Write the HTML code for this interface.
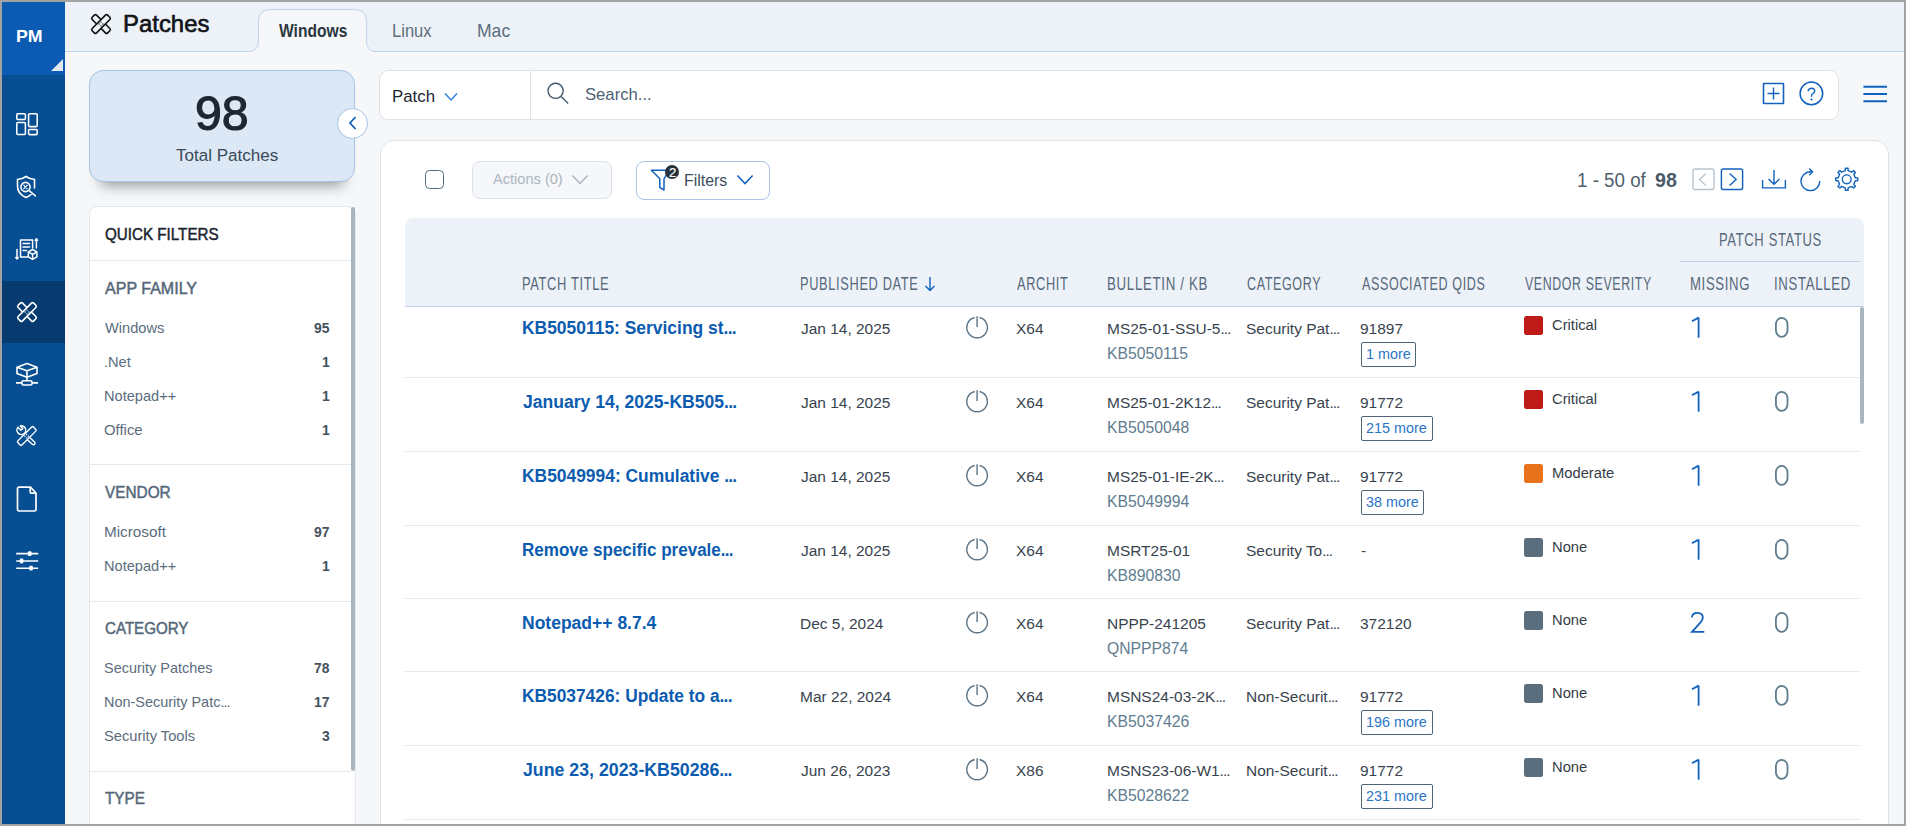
<!DOCTYPE html><html><head><meta charset="utf-8"><title>Patches</title><style>
html,body{margin:0;padding:0;}
body{width:1906px;height:826px;overflow:hidden;position:relative;background:#f5f7f9;font-family:"Liberation Sans", sans-serif;}
.t{position:absolute;white-space:nowrap;font-family:"Liberation Sans", sans-serif;transform-origin:0 0;}
svg{overflow:visible;}
</style></head><body>
<div style="position:absolute;left:65px;top:0px;width:1841.00px;height:52.00px;background:#edf2f9;border-bottom:1px solid #bfd3ea;box-sizing:border-box;"></div>
<svg style="position:absolute;left:246px;top:8px;" width="133" height="45" viewBox="0 0 133 45"><path d="M0 43.5 L4 43.5 A8.5 9.5 0 0 0 12.5 34 L12.5 13.5 Q12.5 1.5 24.5 1.5 L108.5 1.5 Q120.5 1.5 120.5 13.5 L120.5 34 A8.5 9.5 0 0 0 129 43.5 L133 43.5 L133 45 L0 45 Z" fill="#f5f7f9" stroke="none"/>
<path d="M0 43.5 L4 43.5 A8.5 9.5 0 0 0 12.5 34 L12.5 13.5 Q12.5 1.5 24.5 1.5 L108.5 1.5 Q120.5 1.5 120.5 13.5 L120.5 34 A8.5 9.5 0 0 0 129 43.5 L133 43.5" fill="none" stroke="#bfd3ea" stroke-width="1"/></svg>
<svg style="position:absolute;left:89px;top:11.5px;" width="24" height="24" viewBox="0 0 24 24"><g stroke="#111" stroke-width="1.6" stroke-linejoin="round">
<rect x="8.9" y="1.0" width="6.2" height="22.0" rx="1.6" fill="none" transform="rotate(-45 12 12)"/>
<rect x="8.9" y="1.0" width="6.2" height="22.0" rx="1.6" fill="#edf2f9" transform="rotate(45 12 12)"/></g>
<g fill="#111"><circle cx="12" cy="10.1" r="0.7"/><circle cx="10.1" cy="12" r="0.7"/><circle cx="13.9" cy="12" r="0.7"/><circle cx="12" cy="13.9" r="0.7"/></g></svg>
<div class="t" style="left:122.82px;top:12.00px;color:#111418;font-size:24.348px;line-height:24.348px;font-weight:400;-webkit-text-stroke:0.65px #111418;transform:scaleX(0.9828);">Patches</div>
<div class="t" style="left:278.50px;top:23.00px;color:#2b3640;font-size:17.971px;line-height:17.971px;font-weight:700;transform:scaleX(0.8692);">Windows</div>
<div class="t" style="left:391.70px;top:22.00px;color:#5d6d7c;font-size:18.406px;line-height:18.406px;font-weight:400;transform:scaleX(0.9000);">Linux</div>
<div class="t" style="left:476.95px;top:22.00px;color:#5d6d7c;font-size:18.406px;line-height:18.406px;font-weight:400;transform:scaleX(0.9545);">Mac</div>
<div style="position:absolute;left:0px;top:0px;width:65.00px;height:826.00px;background:#084e93;"></div>
<div style="position:absolute;left:0px;top:0px;width:65.00px;height:75.00px;background:#0a5bb1;"></div>
<div style="position:absolute;left:0px;top:281px;width:65.00px;height:62.00px;background:#073b70;"></div>
<div class="t" style="left:16.07px;top:28.00px;color:#ffffff;font-size:17.246px;line-height:17.246px;font-weight:700;transform:scaleX(1.0292);">PM</div>
<svg style="position:absolute;left:51px;top:59px;" width="13" height="12" viewBox="0 0 13 12"><path d="M0 12 L12 0 L12 12 Z" fill="#dfe8f3"/></svg>
<svg style="position:absolute;left:15px;top:112px;" width="24" height="24" viewBox="0 0 24 24"><g fill="none" stroke="#ffffff" stroke-width="1.55">
<rect x="1.8" y="1.8" width="8.6" height="5.6" rx="1"/>
<rect x="1.8" y="10.4" width="8.6" height="12" rx="1"/>
<rect x="13.6" y="1.8" width="8.6" height="12.8" rx="1"/>
<rect x="13.6" y="17.4" width="8.6" height="5.2" rx="1"/></g></svg>
<svg style="position:absolute;left:14.0px;top:175.4px;" width="24" height="24" viewBox="0 0 24 24"><g fill="none" stroke="#ffffff" stroke-width="1.6" stroke-linecap="round">
<path d="M12 1.5 Q8.5 4 3.5 4.5 L3.5 11 Q3.5 19 12 22.5 Q15 21.2 17 19.5"/>
<path d="M12 1.5 Q15.5 4 20.5 4.5 L20.5 13"/>
<circle cx="11.5" cy="12" r="4.6"/>
<path d="M9.7 10.2 L13.3 13.8 M13.3 10.2 L9.7 13.8" stroke-width="1.2"/>
<path d="M15 15.5 L21.4 20.8"/></g></svg>
<svg style="position:absolute;left:14px;top:237px;" width="26" height="25" viewBox="0 0 26 25"><g fill="none" stroke="#ffffff" stroke-width="1.5" stroke-linecap="round" stroke-linejoin="round">
<path d="M13.5 20 L6.5 20 L6.5 3 L18.6 3 L18.6 11"/>
<path d="M9 6.5 L15.5 6.5 M9 10 L15.5 10 M9 13.5 L12.5 13.5"/>
<path d="M3 12.5 L3 22 M1.8 20.6 L3 22 L4.2 20.6"/>
<path d="M22.4 11 L22.4 1.8 M21.2 3.2 L22.4 1.8 L23.6 3.2"/>
<path d="M18.6 12.5 L22.9 14.9 L22.9 19.9 L18.6 22.3 L14.3 19.9 L14.3 14.9 Z M14.3 14.9 L18.6 17.3 L22.9 14.9 M18.6 17.3 L18.6 22.3"/>
</g></svg>
<svg style="position:absolute;left:15px;top:300px;" width="24" height="24" viewBox="0 0 24 24"><g stroke="#ffffff" stroke-width="1.6" stroke-linejoin="round">
<rect x="8.9" y="1.0" width="6.2" height="22.0" rx="1.6" fill="none" transform="rotate(-45 12 12)"/>
<rect x="8.9" y="1.0" width="6.2" height="22.0" rx="1.6" fill="#073b70" transform="rotate(45 12 12)"/></g>
<g fill="#ffffff"><circle cx="12" cy="10.1" r="0.7"/><circle cx="10.1" cy="12" r="0.7"/><circle cx="13.9" cy="12" r="0.7"/><circle cx="12" cy="13.9" r="0.7"/></g></svg>
<svg style="position:absolute;left:15px;top:362px;" width="24" height="24" viewBox="0 0 24 24"><g fill="none" stroke="#ffffff" stroke-width="1.6" stroke-linejoin="round">
<path d="M12 1.6 L22 5.2 L22 11.6 L12 15.2 L2 11.6 L2 5.2 Z M2 5.2 L12 8.8 L22 5.2 M12 8.8 L12 15.2"/>
<path d="M12 15.2 L12 18.8"/>
<rect x="7" y="18.8" width="10" height="4.2" rx="1.3"/>
<path d="M1 20.9 L7 20.9 M17 20.9 L23 20.9"/>
</g></svg>
<svg style="position:absolute;left:12px;top:420px;" width="30" height="30" viewBox="0 0 30 30"><g fill="none" stroke-linecap="round">
<path d="M15.5 17.5 L21.4 23.1" stroke="#ffffff" stroke-width="4.6"/>
<path d="M15.5 17.5 L21.4 23.1" stroke="#084e93" stroke-width="1.8"/>
<g transform="translate(0.7 1.1)"><path d="M5.2 6.3 A4.4 4.4 0 1 0 11.9 6.1" stroke="#ffffff" stroke-width="1.5"/>
<path d="M5.4 6.4 L8.1 9.1 L10.1 7.6 L7.8 4.9" stroke="#ffffff" stroke-width="1.4" stroke-linejoin="round"/>
<path d="M7.8 4.9 A4.4 4.4 0 0 1 11.9 6.1" stroke="#ffffff" stroke-width="1.5"/></g>
</g>
<rect x="11.9" y="5" width="5.8" height="22" rx="1.2" fill="#084e93" stroke="#ffffff" stroke-width="1.4" transform="rotate(45 14.8 16)"/>
<g fill="#ffffff"><circle cx="14.6" cy="14.5" r="0.75"/><circle cx="12.9" cy="16.2" r="0.75"/><circle cx="16.3" cy="16.2" r="0.75"/><circle cx="14.6" cy="17.9" r="0.75"/></g></svg>
<svg style="position:absolute;left:15px;top:486px;" width="24" height="27" viewBox="0 0 24 27"><g fill="none" stroke="#ffffff" stroke-width="1.7" stroke-linejoin="round">
<path d="M4.2 1.2 L15.5 1.2 L21 7 L21 23.5 Q21 25 19.5 25 L4.2 25 Q2.5 25 2.5 23.5 L2.5 2.8 Q2.5 1.2 4.2 1.2 Z"/>
<path d="M15.2 1.5 L15.2 6 Q15.2 7.2 16.4 7.2 L20.8 7.2"/></g></svg>
<svg style="position:absolute;left:15px;top:549px;" width="24" height="24" viewBox="0 0 24 24"><g stroke="#ffffff" stroke-width="1.55" fill="#ffffff">
<path d="M1.2 4.6 L23.2 4.6 M1.2 12 L23.2 12 M1.2 19.2 L23.2 19.2"/></g><g fill="#ffffff">
<rect x="12.9" y="2.2" width="3.6" height="4.8" rx="1.1"/>
<rect x="4.8" y="9.6" width="3.6" height="4.8" rx="1.1"/>
<rect x="14.3" y="16.8" width="3.6" height="4.8" rx="1.1"/></g></svg>
<div style="position:absolute;left:89px;top:70px;width:266.00px;height:112.00px;background:#dce8f5;border:1px solid #a6c2e6;border-radius:14px;box-sizing:border-box;box-shadow:0 15px 14px -12px rgba(0,0,0,0.42);"></div>
<div class="t" style="left:195.12px;top:89.00px;color:#1d2731;font-size:48.841px;line-height:48.841px;font-weight:400;-webkit-text-stroke:1.1px #1d2731;transform:scaleX(0.9882);">98</div>
<div class="t" style="left:176.00px;top:147.00px;color:#3a4a58;font-size:17.101px;line-height:17.101px;font-weight:400;transform:scaleX(0.9961);">Total Patches</div>
<div style="position:absolute;left:337px;top:108px;width:31px;height:31px;border-radius:50%;background:#fff;border:1px solid #a6c2e6;box-sizing:border-box;"></div>
<svg style="position:absolute;left:346px;top:115px;" width="14" height="16" viewBox="0 0 14 16"><path d="M9.5 2 L4 8 L9.5 14" fill="none" stroke="#1162bd" stroke-width="1.8"/></svg>
<div style="position:absolute;left:89px;top:206px;width:267.00px;height:634.00px;background:#fff;border:1px solid #e2e8ee;border-radius:8px 8px 0 0;box-sizing:border-box;"></div>
<div style="position:absolute;left:351px;top:207px;width:4.00px;height:564.00px;background:#a9b6bf;border-radius:2px;"></div>
<div class="t" style="left:105.30px;top:227.00px;color:#1b2530;font-size:16.812px;line-height:16.812px;font-weight:400;-webkit-text-stroke:0.5px #1b2530;transform:scaleX(0.9040);">QUICK FILTERS</div>
<div style="position:absolute;left:90px;top:260px;width:261.00px;height:1.00px;background:#e5eaef;"></div>
<div class="t" style="left:105.30px;top:281.00px;color:#55687a;font-size:16.812px;line-height:16.812px;font-weight:400;-webkit-text-stroke:0.5px #55687a;transform:scaleX(0.9542);">APP FAMILY</div>
<div class="t" style="left:105.30px;top:321.00px;color:#5b6d7d;font-size:14.203px;line-height:14.203px;font-weight:400;transform:scaleX(1.0298);">Windows</div>
<div class="t" style="left:313.90px;top:321.00px;color:#45525e;font-size:14.203px;line-height:14.203px;font-weight:700;transform:scaleX(0.9812);">95</div>
<div class="t" style="left:104.27px;top:355.00px;color:#5b6d7d;font-size:14.203px;line-height:14.203px;font-weight:400;transform:scaleX(1.0298);">.Net</div>
<div class="t" style="left:321.75px;top:355.00px;color:#45525e;font-size:14.203px;line-height:14.203px;font-weight:700;transform:scaleX(0.9812);">1</div>
<div class="t" style="left:104.27px;top:389.00px;color:#5b6d7d;font-size:14.203px;line-height:14.203px;font-weight:400;transform:scaleX(1.0290);">Notepad++</div>
<div class="t" style="left:321.75px;top:389.00px;color:#45525e;font-size:14.203px;line-height:14.203px;font-weight:700;transform:scaleX(0.9812);">1</div>
<div class="t" style="left:104.25px;top:423.00px;color:#5b6d7d;font-size:14.203px;line-height:14.203px;font-weight:400;transform:scaleX(1.0500);">Office</div>
<div class="t" style="left:321.75px;top:423.00px;color:#45525e;font-size:14.203px;line-height:14.203px;font-weight:700;transform:scaleX(0.9812);">1</div>
<div style="position:absolute;left:90px;top:464px;width:261.00px;height:1.00px;background:#e5eaef;"></div>
<div class="t" style="left:105.30px;top:485.00px;color:#55687a;font-size:16.812px;line-height:16.812px;font-weight:400;-webkit-text-stroke:0.5px #55687a;transform:scaleX(0.9141);">VENDOR</div>
<div class="t" style="left:104.22px;top:525.00px;color:#5b6d7d;font-size:14.203px;line-height:14.203px;font-weight:400;transform:scaleX(1.0754);">Microsoft</div>
<div class="t" style="left:313.90px;top:525.00px;color:#45525e;font-size:14.203px;line-height:14.203px;font-weight:700;transform:scaleX(0.9812);">97</div>
<div class="t" style="left:104.27px;top:559.00px;color:#5b6d7d;font-size:14.203px;line-height:14.203px;font-weight:400;transform:scaleX(1.0290);">Notepad++</div>
<div class="t" style="left:321.75px;top:559.00px;color:#45525e;font-size:14.203px;line-height:14.203px;font-weight:700;transform:scaleX(0.9812);">1</div>
<div style="position:absolute;left:90px;top:601px;width:261.00px;height:1.00px;background:#e5eaef;"></div>
<div class="t" style="left:105.30px;top:621.00px;color:#55687a;font-size:16.812px;line-height:16.812px;font-weight:400;-webkit-text-stroke:0.5px #55687a;transform:scaleX(0.9000);">CATEGORY</div>
<div class="t" style="left:104.28px;top:661.00px;color:#5b6d7d;font-size:14.203px;line-height:14.203px;font-weight:400;transform:scaleX(1.0190);">Security Patches</div>
<div class="t" style="left:313.90px;top:661.00px;color:#45525e;font-size:14.203px;line-height:14.203px;font-weight:700;transform:scaleX(0.9812);">78</div>
<div class="t" style="left:104.28px;top:695.00px;color:#5b6d7d;font-size:14.203px;line-height:14.203px;font-weight:400;transform:scaleX(1.0180);">Non-Security Patc<span style="letter-spacing:-0.9px">...</span></div>
<div class="t" style="left:313.90px;top:695.00px;color:#45525e;font-size:14.203px;line-height:14.203px;font-weight:700;transform:scaleX(0.9812);">17</div>
<div class="t" style="left:104.27px;top:729.00px;color:#5b6d7d;font-size:14.203px;line-height:14.203px;font-weight:400;transform:scaleX(1.0345);">Security Tools</div>
<div class="t" style="left:321.75px;top:729.00px;color:#45525e;font-size:14.203px;line-height:14.203px;font-weight:700;transform:scaleX(0.9812);">3</div>
<div style="position:absolute;left:90px;top:771px;width:261.00px;height:1.00px;background:#e5eaef;"></div>
<div class="t" style="left:105.30px;top:791.00px;color:#55687a;font-size:16.812px;line-height:16.812px;font-weight:400;-webkit-text-stroke:0.5px #55687a;transform:scaleX(0.9091);">TYPE</div>
<div style="position:absolute;left:379px;top:70px;width:1460.00px;height:50.00px;background:#fff;border:1px solid #dde3e7;border-radius:9px;box-sizing:border-box;"></div>
<div style="position:absolute;left:530px;top:71px;width:1.00px;height:48.00px;background:#dde3e7;"></div>
<div class="t" style="left:392.13px;top:88.00px;color:#1b2530;font-size:17.391px;line-height:17.391px;font-weight:400;transform:scaleX(0.9674);">Patch</div>
<svg style="position:absolute;left:444px;top:92px;" width="14" height="10" viewBox="0 0 14 10"><path d="M1 1.5 L7 8 L13 1.5" fill="none" stroke="#2c7bd3" stroke-width="1.4"/></svg>
<svg style="position:absolute;left:546px;top:82px;" width="24" height="23" viewBox="0 0 24 23"><g fill="none" stroke="#3f586d" stroke-width="1.35"><circle cx="9.6" cy="8.8" r="7.6"/><path d="M15 14.6 L22.2 21.6"/></g></svg>
<div class="t" style="left:584.52px;top:87.00px;color:#4d6275;font-size:16.957px;line-height:16.957px;font-weight:400;transform:scaleX(0.9831);">Search...</div>
<svg style="position:absolute;left:1762px;top:82px;" width="23" height="23" viewBox="0 0 23 23"><g fill="none" stroke="#1162bd" stroke-width="1.6"><rect x="1.5" y="1.5" width="20" height="20" rx="0.5"/><path d="M5.5 11.5 L17.5 11.5 M11.5 5.5 L11.5 17.5" stroke-width="1.4"/></g></svg>
<svg style="position:absolute;left:1798px;top:80px;" width="27" height="27" viewBox="0 0 27 27"><g fill="none" stroke="#1162bd" stroke-width="1.5"><circle cx="13.4" cy="13.4" r="11.3"/><path d="M10 11.3 Q10.6 8.3 13.6 8.3 Q16.7 8.3 16.7 11.1 Q16.7 13.1 14.6 13.9 Q13.5 14.4 13.5 15.9 L13.5 16.8" stroke-width="1.4"/></g><circle cx="13.5" cy="19.5" r="1.05" fill="#1162bd"/></svg>
<svg style="position:absolute;left:1862px;top:84px;" width="27" height="20" viewBox="0 0 27 20"><g stroke="#1162bd" stroke-width="1.9"><path d="M1.4 2.8 L25 2.8 M1.4 10 L25 10 M1.4 17.3 L25 17.3"/></g></svg>
<div style="position:absolute;left:380px;top:140px;width:1509.00px;height:760.00px;background:#fff;border:1px solid #dde3e7;border-radius:14px;box-sizing:border-box;"></div>
<div style="position:absolute;left:425px;top:170px;width:19.00px;height:19.00px;border:1.6px solid #547080;border-radius:4.5px;box-sizing:border-box;background:#fff;"></div>
<div style="position:absolute;left:472px;top:161px;width:140.00px;height:38.00px;background:#f5f7fa;border:1px solid #dde3e8;border-radius:8px;box-sizing:border-box;"></div>
<div class="t" style="left:493.10px;top:172.00px;color:#abb6c0;font-size:14.493px;line-height:14.493px;font-weight:400;transform:scaleX(1.0072);">Actions (0)</div>
<svg style="position:absolute;left:571px;top:174px;" width="18" height="11" viewBox="0 0 18 11"><path d="M1.4 1.5 L9 9.5 L16.6 1.5" fill="none" stroke="#abb6c0" stroke-width="1.5"/></svg>
<div style="position:absolute;left:636px;top:161px;width:134.00px;height:39.00px;background:#fff;border:1px solid #a8c4e8;border-radius:8px;box-sizing:border-box;"></div>
<svg style="position:absolute;left:650px;top:168px;" width="22" height="25" viewBox="0 0 22 25"><path d="M1.4 2.2 L19.5 2.2 L14 10.8 L14 22 L9.8 19.4 L9.8 10.8 Z" fill="none" stroke="#1162bd" stroke-width="1.5" stroke-linejoin="round"/></svg>
<div style="position:absolute;left:664.85px;top:164.75px;width:14.1px;height:14.1px;border-radius:50%;background:#26323c;"></div>
<div class="t" style="left:668.60px;top:168.00px;color:#ffffff;font-size:11.884px;line-height:11.884px;font-weight:400;-webkit-text-stroke:0.2px #ffffff;transform:scaleX(1.1000);">2</div>
<div class="t" style="left:683.80px;top:173.00px;color:#3b4d5e;font-size:15.942px;line-height:15.942px;font-weight:400;transform:scaleX(0.9976);">Filters</div>
<svg style="position:absolute;left:736px;top:174px;" width="18" height="11" viewBox="0 0 18 11"><path d="M1.4 1.5 L9 9.5 L16.6 1.5" fill="none" stroke="#1162bd" stroke-width="1.6"/></svg>
<div class="t" style="left:1577.07px;top:170.00px;color:#4f5f6d;font-size:20.145px;line-height:20.145px;font-weight:400;transform:scaleX(0.9315);">1 - 50 of</div>
<div class="t" style="left:1654.52px;top:170.00px;color:#4a5a69;font-size:20.145px;line-height:20.145px;font-weight:700;transform:scaleX(0.9762);">98</div>
<svg style="position:absolute;left:1692px;top:168px;" width="23" height="23" viewBox="0 0 23 23"><rect x="1" y="1" width="21" height="20.5" rx="1.8" fill="none" stroke="#b9c3cc" stroke-width="1.4"/><path d="M14 5.5 L7.4 11.4 L14 17.6" fill="none" stroke="#b9c3cc" stroke-width="1.3"/></svg>
<svg style="position:absolute;left:1720px;top:168px;" width="24" height="23" viewBox="0 0 24 23"><rect x="1.4" y="1" width="21.2" height="20.5" rx="1.8" fill="none" stroke="#1162bd" stroke-width="1.45"/><path d="M9.6 5.5 L16.2 11.4 L9.6 17.6" fill="none" stroke="#1162bd" stroke-width="1.35"/></svg>
<svg style="position:absolute;left:1761px;top:168px;" width="27" height="22" viewBox="0 0 27 22"><g fill="none" stroke="#1162bd" stroke-width="1.4" stroke-linecap="butt"><path d="M1.6 12 L1.6 19.9 L24.4 19.9 L24.4 12"/><path d="M13 2 L13 16 M7.5 11 L13 16.3 L18.5 11"/></g></svg>
<svg style="position:absolute;left:1798px;top:166px;" width="26" height="26" viewBox="0 0 26 26"><g fill="none" stroke="#1162bd" stroke-width="1.4"><path d="M21.8 15 A9.4 9.4 0 1 1 12.2 5.8 L14 5.8"/><path d="M11.2 2.4 L14.6 5.8 L11.2 9.2"/></g></svg>
<svg style="position:absolute;left:1833px;top:166px;" width="27" height="27" viewBox="0 0 27 27"><g fill="none" stroke="#1162bd" stroke-width="1.4" stroke-linejoin="round"><path d="M22.28 11.87 L24.72 11.95 L24.72 14.65 L22.28 14.73 L20.78 18.36 L22.44 20.14 L20.54 22.04 L18.76 20.38 L15.13 21.88 L15.05 24.32 L12.35 24.32 L12.27 21.88 L8.64 20.38 L6.86 22.04 L4.96 20.14 L6.62 18.36 L5.12 14.73 L2.68 14.65 L2.68 11.95 L5.12 11.87 L6.62 8.24 L4.96 6.46 L6.86 4.56 L8.64 6.22 L12.27 4.72 L12.35 2.28 L15.05 2.28 L15.13 4.72 L18.76 6.22 L20.54 4.56 L22.44 6.46 L20.78 8.24 Z"/><circle cx="13.7" cy="13.3" r="4.4"/></g></svg>
<div style="position:absolute;left:405px;top:218px;width:1459.00px;height:89.00px;background:#edf2f9;border-bottom:1px solid #bcd1e9;border-radius:8px 8px 0 0;box-sizing:border-box;"></div>
<div class="t" style="left:522.27px;top:276.00px;color:#56687a;font-size:17.681px;line-height:17.681px;font-weight:400;letter-spacing:0.9px;transform:scaleX(0.7288);">PATCH TITLE</div>
<div class="t" style="left:800.28px;top:276.00px;color:#56687a;font-size:17.681px;line-height:17.681px;font-weight:400;letter-spacing:0.9px;transform:scaleX(0.7248);">PUBLISHED DATE</div>
<div class="t" style="left:1017.40px;top:276.00px;color:#56687a;font-size:17.681px;line-height:17.681px;font-weight:400;letter-spacing:0.9px;transform:scaleX(0.7229);">ARCHIT</div>
<div class="t" style="left:1107.25px;top:276.00px;color:#56687a;font-size:17.681px;line-height:17.681px;font-weight:400;letter-spacing:0.9px;transform:scaleX(0.7523);">BULLETIN / KB</div>
<div class="t" style="left:1247.09px;top:276.00px;color:#56687a;font-size:17.681px;line-height:17.681px;font-weight:400;letter-spacing:0.9px;transform:scaleX(0.7078);">CATEGORY</div>
<div class="t" style="left:1362.00px;top:276.00px;color:#56687a;font-size:17.681px;line-height:17.681px;font-weight:400;letter-spacing:0.9px;transform:scaleX(0.7092);">ASSOCIATED QIDS</div>
<div class="t" style="left:1525.20px;top:276.00px;color:#56687a;font-size:17.681px;line-height:17.681px;font-weight:400;letter-spacing:0.9px;transform:scaleX(0.6989);">VENDOR SEVERITY</div>
<div class="t" style="left:1719.27px;top:232.00px;color:#56687a;font-size:17.681px;line-height:17.681px;font-weight:400;letter-spacing:0.9px;transform:scaleX(0.7348);">PATCH STATUS</div>
<div class="t" style="left:1689.96px;top:276.00px;color:#56687a;font-size:17.681px;line-height:17.681px;font-weight:400;letter-spacing:0.9px;transform:scaleX(0.7436);">MISSING</div>
<div class="t" style="left:1773.65px;top:276.00px;color:#56687a;font-size:17.681px;line-height:17.681px;font-weight:400;letter-spacing:0.9px;transform:scaleX(0.7460);">INSTALLED</div>
<svg style="position:absolute;left:924px;top:276px;" width="12" height="16" viewBox="0 0 12 16"><g fill="none" stroke="#1162bd" stroke-width="1.4"><path d="M6 1 L6 14.5 M1.5 10 L6 14.5 L10.5 10"/></g></svg>
<div style="position:absolute;left:1680px;top:261px;width:180.00px;height:1.00px;background:#bcd1e9;"></div>
<div class="t" style="left:521.84px;top:319.00px;color:#0b5cb0;font-size:18.261px;line-height:18.261px;font-weight:700;transform:scaleX(0.9552);">KB5050115: Servicing st<span style="letter-spacing:-0.8px">...</span></div>
<div class="t" style="left:800.60px;top:321.00px;color:#38434e;font-size:15.362px;line-height:15.362px;font-weight:400;transform:scaleX(1.0068);">Jan 14, 2025</div>
<svg style="position:absolute;left:965px;top:315px;" width="24" height="24" viewBox="0 0 24 24"><g fill="none" stroke="#5b7384" stroke-width="1.4"><path d="M9.7 2.5 A10.3 10.3 0 1 0 14.5 2.5"/><path d="M12.1 1.2 L12.1 12"/></g></svg>
<div class="t" style="left:1015.99px;top:321.00px;color:#38434e;font-size:15.362px;line-height:15.362px;font-weight:400;transform:scaleX(1.0068);">X64</div>
<div class="t" style="left:1107.19px;top:321.00px;color:#38434e;font-size:15.362px;line-height:15.362px;font-weight:400;transform:scaleX(1.0068);">MS25-01-SSU-5<span style="letter-spacing:-1.0px">...</span></div>
<div class="t" style="left:1107.31px;top:346.00px;color:#5f7d90;font-size:15.942px;line-height:15.942px;font-weight:400;transform:scaleX(0.9877);">KB5050115</div>
<div class="t" style="left:1245.99px;top:321.00px;color:#38434e;font-size:15.362px;line-height:15.362px;font-weight:400;transform:scaleX(1.0068);">Security Pat<span style="letter-spacing:-1.0px">...</span></div>
<div class="t" style="left:1360.29px;top:321.00px;color:#38434e;font-size:15.362px;line-height:15.362px;font-weight:400;transform:scaleX(1.0068);">91897</div>
<div style="position:absolute;left:1361.30px;top:342.30px;width:55.00px;height:25.2px;box-sizing:border-box;border:1.2px solid #4f6474;border-radius:2px;"></div><div class="t" style="left:1366.49px;top:347.00px;color:#2a74c8;font-size:14.203px;line-height:14.203px;font-weight:400;transform:scaleX(1.0140);">1 more</div>
<div style="position:absolute;left:1524.2px;top:316px;width:18.60px;height:18.70px;background:#be1a17;border-radius:2.5px;"></div>
<div class="t" style="left:1552.29px;top:318.00px;color:#333d47;font-size:14.638px;line-height:14.638px;font-weight:400;transform:scaleX(1.0070);">Critical</div>
<svg style="position:absolute;left:1680px;top:310px;" width="30" height="35" viewBox="0 0 30 35"><path d="M18.6 7.4 L18.6 27.8 M18.6 7.6 L12 11.2" fill="none" stroke="#1062bd" stroke-width="1.8"/></svg>
<svg style="position:absolute;left:1765px;top:310px;" width="30" height="35" viewBox="0 0 30 35"><rect x="10.9" y="7.8" width="11.6" height="19.1" rx="5.8" ry="6.6" fill="none" stroke="#5e7d8c" stroke-width="1.8"/></svg>
<div style="position:absolute;left:405px;top:377px;width:1455.00px;height:1.00px;background:#e4e9ee;"></div>
<div class="t" style="left:522.80px;top:393.00px;color:#0b5cb0;font-size:18.261px;line-height:18.261px;font-weight:700;transform:scaleX(0.9622);">January 14, 2025-KB505<span style="letter-spacing:-0.8px">...</span></div>
<div class="t" style="left:800.60px;top:395.00px;color:#38434e;font-size:15.362px;line-height:15.362px;font-weight:400;transform:scaleX(1.0068);">Jan 14, 2025</div>
<svg style="position:absolute;left:965px;top:389px;" width="24" height="24" viewBox="0 0 24 24"><g fill="none" stroke="#5b7384" stroke-width="1.4"><path d="M9.7 2.5 A10.3 10.3 0 1 0 14.5 2.5"/><path d="M12.1 1.2 L12.1 12"/></g></svg>
<div class="t" style="left:1015.99px;top:395.00px;color:#38434e;font-size:15.362px;line-height:15.362px;font-weight:400;transform:scaleX(1.0068);">X64</div>
<div class="t" style="left:1107.19px;top:395.00px;color:#38434e;font-size:15.362px;line-height:15.362px;font-weight:400;transform:scaleX(1.0068);">MS25-01-2K12<span style="letter-spacing:-1.0px">...</span></div>
<div class="t" style="left:1107.31px;top:420.00px;color:#5f7d90;font-size:15.942px;line-height:15.942px;font-weight:400;transform:scaleX(0.9877);">KB5050048</div>
<div class="t" style="left:1245.99px;top:395.00px;color:#38434e;font-size:15.362px;line-height:15.362px;font-weight:400;transform:scaleX(1.0068);">Security Pat<span style="letter-spacing:-1.0px">...</span></div>
<div class="t" style="left:1360.29px;top:395.00px;color:#38434e;font-size:15.362px;line-height:15.362px;font-weight:400;transform:scaleX(1.0068);">91772</div>
<div style="position:absolute;left:1361.30px;top:416.30px;width:71.22px;height:25.2px;box-sizing:border-box;border:1.2px solid #4f6474;border-radius:2px;"></div><div class="t" style="left:1366.49px;top:421.00px;color:#2a74c8;font-size:14.203px;line-height:14.203px;font-weight:400;transform:scaleX(1.0140);">215 more</div>
<div style="position:absolute;left:1524.2px;top:390px;width:18.60px;height:18.70px;background:#be1a17;border-radius:2.5px;"></div>
<div class="t" style="left:1552.29px;top:392.00px;color:#333d47;font-size:14.638px;line-height:14.638px;font-weight:400;transform:scaleX(1.0070);">Critical</div>
<svg style="position:absolute;left:1680px;top:384px;" width="30" height="35" viewBox="0 0 30 35"><path d="M18.6 7.4 L18.6 27.8 M18.6 7.6 L12 11.2" fill="none" stroke="#1062bd" stroke-width="1.8"/></svg>
<svg style="position:absolute;left:1765px;top:384px;" width="30" height="35" viewBox="0 0 30 35"><rect x="10.9" y="7.8" width="11.6" height="19.1" rx="5.8" ry="6.6" fill="none" stroke="#5e7d8c" stroke-width="1.8"/></svg>
<div style="position:absolute;left:405px;top:451px;width:1455.00px;height:1.00px;background:#e4e9ee;"></div>
<div class="t" style="left:521.85px;top:467.00px;color:#0b5cb0;font-size:18.261px;line-height:18.261px;font-weight:700;transform:scaleX(0.9536);">KB5049994: Cumulative <span style="letter-spacing:-0.8px">...</span></div>
<div class="t" style="left:800.60px;top:469.00px;color:#38434e;font-size:15.362px;line-height:15.362px;font-weight:400;transform:scaleX(1.0068);">Jan 14, 2025</div>
<svg style="position:absolute;left:965px;top:463px;" width="24" height="24" viewBox="0 0 24 24"><g fill="none" stroke="#5b7384" stroke-width="1.4"><path d="M9.7 2.5 A10.3 10.3 0 1 0 14.5 2.5"/><path d="M12.1 1.2 L12.1 12"/></g></svg>
<div class="t" style="left:1015.99px;top:469.00px;color:#38434e;font-size:15.362px;line-height:15.362px;font-weight:400;transform:scaleX(1.0068);">X64</div>
<div class="t" style="left:1107.19px;top:469.00px;color:#38434e;font-size:15.362px;line-height:15.362px;font-weight:400;transform:scaleX(1.0068);">MS25-01-IE-2K<span style="letter-spacing:-1.0px">...</span></div>
<div class="t" style="left:1107.31px;top:494.00px;color:#5f7d90;font-size:15.942px;line-height:15.942px;font-weight:400;transform:scaleX(0.9877);">KB5049994</div>
<div class="t" style="left:1245.99px;top:469.00px;color:#38434e;font-size:15.362px;line-height:15.362px;font-weight:400;transform:scaleX(1.0068);">Security Pat<span style="letter-spacing:-1.0px">...</span></div>
<div class="t" style="left:1360.29px;top:469.00px;color:#38434e;font-size:15.362px;line-height:15.362px;font-weight:400;transform:scaleX(1.0068);">91772</div>
<div style="position:absolute;left:1361.30px;top:490.30px;width:63.11px;height:25.2px;box-sizing:border-box;border:1.2px solid #4f6474;border-radius:2px;"></div><div class="t" style="left:1366.49px;top:495.00px;color:#2a74c8;font-size:14.203px;line-height:14.203px;font-weight:400;transform:scaleX(1.0140);">38 more</div>
<div style="position:absolute;left:1524.2px;top:464px;width:18.60px;height:18.70px;background:#e8711c;border-radius:2.5px;"></div>
<div class="t" style="left:1552.29px;top:466.00px;color:#333d47;font-size:14.638px;line-height:14.638px;font-weight:400;transform:scaleX(1.0070);">Moderate</div>
<svg style="position:absolute;left:1680px;top:458px;" width="30" height="35" viewBox="0 0 30 35"><path d="M18.6 7.4 L18.6 27.8 M18.6 7.6 L12 11.2" fill="none" stroke="#1062bd" stroke-width="1.8"/></svg>
<svg style="position:absolute;left:1765px;top:458px;" width="30" height="35" viewBox="0 0 30 35"><rect x="10.9" y="7.8" width="11.6" height="19.1" rx="5.8" ry="6.6" fill="none" stroke="#5e7d8c" stroke-width="1.8"/></svg>
<div style="position:absolute;left:405px;top:525px;width:1455.00px;height:1.00px;background:#e4e9ee;"></div>
<div class="t" style="left:521.87px;top:541.00px;color:#0b5cb0;font-size:18.261px;line-height:18.261px;font-weight:700;transform:scaleX(0.9333);">Remove specific prevale<span style="letter-spacing:-0.8px">...</span></div>
<div class="t" style="left:800.60px;top:543.00px;color:#38434e;font-size:15.362px;line-height:15.362px;font-weight:400;transform:scaleX(1.0068);">Jan 14, 2025</div>
<svg style="position:absolute;left:965px;top:537px;" width="24" height="24" viewBox="0 0 24 24"><g fill="none" stroke="#5b7384" stroke-width="1.4"><path d="M9.7 2.5 A10.3 10.3 0 1 0 14.5 2.5"/><path d="M12.1 1.2 L12.1 12"/></g></svg>
<div class="t" style="left:1015.99px;top:543.00px;color:#38434e;font-size:15.362px;line-height:15.362px;font-weight:400;transform:scaleX(1.0068);">X64</div>
<div class="t" style="left:1107.19px;top:543.00px;color:#38434e;font-size:15.362px;line-height:15.362px;font-weight:400;transform:scaleX(1.0068);">MSRT25-01</div>
<div class="t" style="left:1107.31px;top:568.00px;color:#5f7d90;font-size:15.942px;line-height:15.942px;font-weight:400;transform:scaleX(0.9877);">KB890830</div>
<div class="t" style="left:1245.99px;top:543.00px;color:#38434e;font-size:15.362px;line-height:15.362px;font-weight:400;transform:scaleX(1.0068);">Security To<span style="letter-spacing:-1.0px">...</span></div>
<div class="t" style="left:1361.30px;top:543.00px;color:#38434e;font-size:15.362px;line-height:15.362px;font-weight:400;transform:scaleX(1.0068);">-</div>
<div style="position:absolute;left:1524.2px;top:538px;width:18.60px;height:18.70px;background:#5b6e7d;border-radius:2.5px;"></div>
<div class="t" style="left:1552.29px;top:540.00px;color:#333d47;font-size:14.638px;line-height:14.638px;font-weight:400;transform:scaleX(1.0070);">None</div>
<svg style="position:absolute;left:1680px;top:532px;" width="30" height="35" viewBox="0 0 30 35"><path d="M18.6 7.4 L18.6 27.8 M18.6 7.6 L12 11.2" fill="none" stroke="#1062bd" stroke-width="1.8"/></svg>
<svg style="position:absolute;left:1765px;top:532px;" width="30" height="35" viewBox="0 0 30 35"><rect x="10.9" y="7.8" width="11.6" height="19.1" rx="5.8" ry="6.6" fill="none" stroke="#5e7d8c" stroke-width="1.8"/></svg>
<div style="position:absolute;left:405px;top:598px;width:1455.00px;height:1.00px;background:#e4e9ee;"></div>
<div class="t" style="left:521.84px;top:614.00px;color:#0b5cb0;font-size:18.261px;line-height:18.261px;font-weight:700;transform:scaleX(0.9597);">Notepad++ 8.7.4</div>
<div class="t" style="left:799.59px;top:616.00px;color:#38434e;font-size:15.362px;line-height:15.362px;font-weight:400;transform:scaleX(1.0068);">Dec 5, 2024</div>
<svg style="position:absolute;left:965px;top:610px;" width="24" height="24" viewBox="0 0 24 24"><g fill="none" stroke="#5b7384" stroke-width="1.4"><path d="M9.7 2.5 A10.3 10.3 0 1 0 14.5 2.5"/><path d="M12.1 1.2 L12.1 12"/></g></svg>
<div class="t" style="left:1015.99px;top:616.00px;color:#38434e;font-size:15.362px;line-height:15.362px;font-weight:400;transform:scaleX(1.0068);">X64</div>
<div class="t" style="left:1107.19px;top:616.00px;color:#38434e;font-size:15.362px;line-height:15.362px;font-weight:400;transform:scaleX(1.0068);">NPPP-241205</div>
<div class="t" style="left:1107.31px;top:641.00px;color:#5f7d90;font-size:15.942px;line-height:15.942px;font-weight:400;transform:scaleX(0.9877);">QNPPP874</div>
<div class="t" style="left:1245.99px;top:616.00px;color:#38434e;font-size:15.362px;line-height:15.362px;font-weight:400;transform:scaleX(1.0068);">Security Pat<span style="letter-spacing:-1.0px">...</span></div>
<div class="t" style="left:1360.29px;top:616.00px;color:#38434e;font-size:15.362px;line-height:15.362px;font-weight:400;transform:scaleX(1.0068);">372120</div>
<div style="position:absolute;left:1524.2px;top:611px;width:18.60px;height:18.70px;background:#5b6e7d;border-radius:2.5px;"></div>
<div class="t" style="left:1552.29px;top:613.00px;color:#333d47;font-size:14.638px;line-height:14.638px;font-weight:400;transform:scaleX(1.0070);">None</div>
<svg style="position:absolute;left:1680px;top:605px;" width="30" height="35" viewBox="0 0 30 35"><path d="M11.9 12.3 Q12.3 7.9 17.6 7.9 Q22.8 8 22.8 12.6 Q22.8 14.6 21 16.8 L12 26.9 L24.3 26.9" fill="none" stroke="#1062bd" stroke-width="1.8"/></svg>
<svg style="position:absolute;left:1765px;top:605px;" width="30" height="35" viewBox="0 0 30 35"><rect x="10.9" y="7.8" width="11.6" height="19.1" rx="5.8" ry="6.6" fill="none" stroke="#5e7d8c" stroke-width="1.8"/></svg>
<div style="position:absolute;left:405px;top:671px;width:1455.00px;height:1.00px;background:#e4e9ee;"></div>
<div class="t" style="left:521.85px;top:687.00px;color:#0b5cb0;font-size:18.261px;line-height:18.261px;font-weight:700;transform:scaleX(0.9500);">KB5037426: Update to a<span style="letter-spacing:-0.8px">...</span></div>
<div class="t" style="left:799.59px;top:689.00px;color:#38434e;font-size:15.362px;line-height:15.362px;font-weight:400;transform:scaleX(1.0068);">Mar 22, 2024</div>
<svg style="position:absolute;left:965px;top:683px;" width="24" height="24" viewBox="0 0 24 24"><g fill="none" stroke="#5b7384" stroke-width="1.4"><path d="M9.7 2.5 A10.3 10.3 0 1 0 14.5 2.5"/><path d="M12.1 1.2 L12.1 12"/></g></svg>
<div class="t" style="left:1015.99px;top:689.00px;color:#38434e;font-size:15.362px;line-height:15.362px;font-weight:400;transform:scaleX(1.0068);">X64</div>
<div class="t" style="left:1107.19px;top:689.00px;color:#38434e;font-size:15.362px;line-height:15.362px;font-weight:400;transform:scaleX(1.0068);">MSNS24-03-2K<span style="letter-spacing:-1.0px">...</span></div>
<div class="t" style="left:1107.31px;top:714.00px;color:#5f7d90;font-size:15.942px;line-height:15.942px;font-weight:400;transform:scaleX(0.9877);">KB5037426</div>
<div class="t" style="left:1245.99px;top:689.00px;color:#38434e;font-size:15.362px;line-height:15.362px;font-weight:400;transform:scaleX(1.0068);">Non-Securit<span style="letter-spacing:-1.0px">...</span></div>
<div class="t" style="left:1360.29px;top:689.00px;color:#38434e;font-size:15.362px;line-height:15.362px;font-weight:400;transform:scaleX(1.0068);">91772</div>
<div style="position:absolute;left:1361.30px;top:710.30px;width:71.22px;height:25.2px;box-sizing:border-box;border:1.2px solid #4f6474;border-radius:2px;"></div><div class="t" style="left:1366.49px;top:715.00px;color:#2a74c8;font-size:14.203px;line-height:14.203px;font-weight:400;transform:scaleX(1.0140);">196 more</div>
<div style="position:absolute;left:1524.2px;top:684px;width:18.60px;height:18.70px;background:#5b6e7d;border-radius:2.5px;"></div>
<div class="t" style="left:1552.29px;top:686.00px;color:#333d47;font-size:14.638px;line-height:14.638px;font-weight:400;transform:scaleX(1.0070);">None</div>
<svg style="position:absolute;left:1680px;top:678px;" width="30" height="35" viewBox="0 0 30 35"><path d="M18.6 7.4 L18.6 27.8 M18.6 7.6 L12 11.2" fill="none" stroke="#1062bd" stroke-width="1.8"/></svg>
<svg style="position:absolute;left:1765px;top:678px;" width="30" height="35" viewBox="0 0 30 35"><rect x="10.9" y="7.8" width="11.6" height="19.1" rx="5.8" ry="6.6" fill="none" stroke="#5e7d8c" stroke-width="1.8"/></svg>
<div style="position:absolute;left:405px;top:745px;width:1455.00px;height:1.00px;background:#e4e9ee;"></div>
<div class="t" style="left:522.80px;top:761.00px;color:#0b5cb0;font-size:18.261px;line-height:18.261px;font-weight:700;transform:scaleX(0.9721);">June 23, 2023-KB50286<span style="letter-spacing:-0.8px">...</span></div>
<div class="t" style="left:800.60px;top:763.00px;color:#38434e;font-size:15.362px;line-height:15.362px;font-weight:400;transform:scaleX(1.0068);">Jun 26, 2023</div>
<svg style="position:absolute;left:965px;top:757px;" width="24" height="24" viewBox="0 0 24 24"><g fill="none" stroke="#5b7384" stroke-width="1.4"><path d="M9.7 2.5 A10.3 10.3 0 1 0 14.5 2.5"/><path d="M12.1 1.2 L12.1 12"/></g></svg>
<div class="t" style="left:1015.99px;top:763.00px;color:#38434e;font-size:15.362px;line-height:15.362px;font-weight:400;transform:scaleX(1.0068);">X86</div>
<div class="t" style="left:1107.19px;top:763.00px;color:#38434e;font-size:15.362px;line-height:15.362px;font-weight:400;transform:scaleX(1.0068);">MSNS23-06-W1<span style="letter-spacing:-1.0px">...</span></div>
<div class="t" style="left:1107.31px;top:788.00px;color:#5f7d90;font-size:15.942px;line-height:15.942px;font-weight:400;transform:scaleX(0.9877);">KB5028622</div>
<div class="t" style="left:1245.99px;top:763.00px;color:#38434e;font-size:15.362px;line-height:15.362px;font-weight:400;transform:scaleX(1.0068);">Non-Securit<span style="letter-spacing:-1.0px">...</span></div>
<div class="t" style="left:1360.29px;top:763.00px;color:#38434e;font-size:15.362px;line-height:15.362px;font-weight:400;transform:scaleX(1.0068);">91772</div>
<div style="position:absolute;left:1361.30px;top:784.30px;width:71.22px;height:25.2px;box-sizing:border-box;border:1.2px solid #4f6474;border-radius:2px;"></div><div class="t" style="left:1366.49px;top:789.00px;color:#2a74c8;font-size:14.203px;line-height:14.203px;font-weight:400;transform:scaleX(1.0140);">231 more</div>
<div style="position:absolute;left:1524.2px;top:758px;width:18.60px;height:18.70px;background:#5b6e7d;border-radius:2.5px;"></div>
<div class="t" style="left:1552.29px;top:760.00px;color:#333d47;font-size:14.638px;line-height:14.638px;font-weight:400;transform:scaleX(1.0070);">None</div>
<svg style="position:absolute;left:1680px;top:752px;" width="30" height="35" viewBox="0 0 30 35"><path d="M18.6 7.4 L18.6 27.8 M18.6 7.6 L12 11.2" fill="none" stroke="#1062bd" stroke-width="1.8"/></svg>
<svg style="position:absolute;left:1765px;top:752px;" width="30" height="35" viewBox="0 0 30 35"><rect x="10.9" y="7.8" width="11.6" height="19.1" rx="5.8" ry="6.6" fill="none" stroke="#5e7d8c" stroke-width="1.8"/></svg>
<div style="position:absolute;left:405px;top:819px;width:1455.00px;height:1.00px;background:#e4e9ee;"></div>
<div style="position:absolute;left:1860px;top:307px;width:4.00px;height:117.00px;background:#a9b6bf;border-radius:2px;"></div>
<div style="position:absolute;left:0;top:0;width:1906px;height:826px;box-sizing:border-box;border:2px solid #a3a3a3;pointer-events:none;"></div>
</body></html>
